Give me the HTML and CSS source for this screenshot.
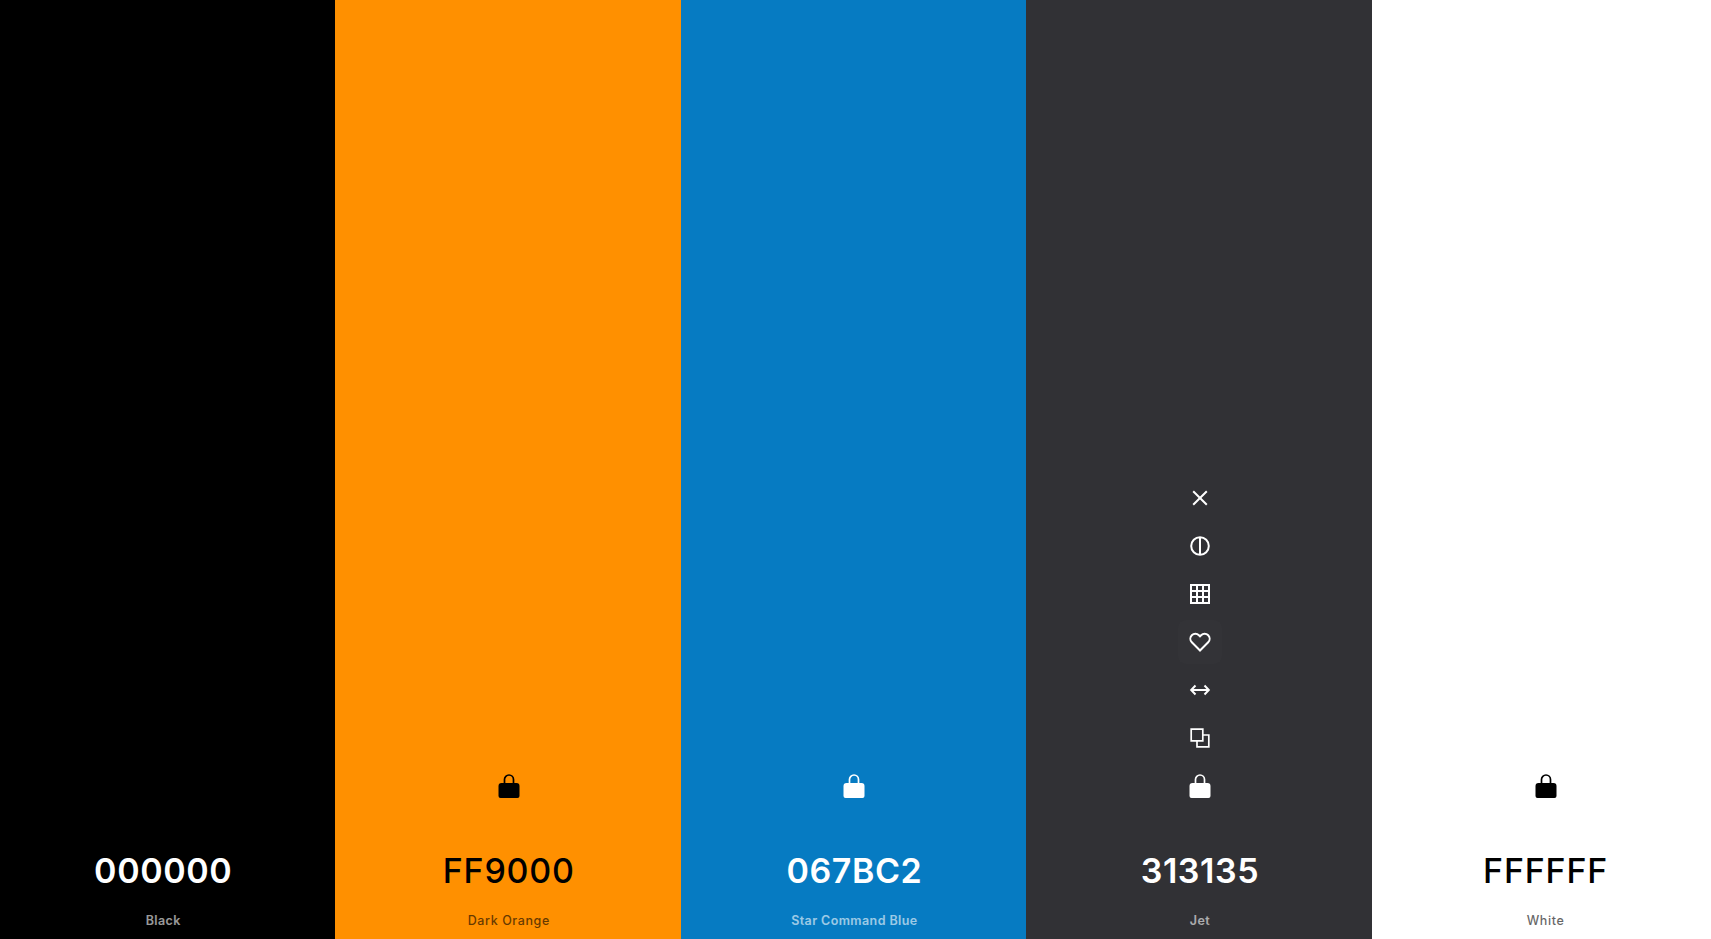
FILE: index.html
```html
<!DOCTYPE html>
<html lang="en">
  <head>
    <meta charset="UTF-8" />
    <title>Palette</title>
    <link rel="stylesheet" href="styles.css">
  </head>
  <body>
    <div class="palette">
      <div class="swatch swatch-black">
        <div class="code">000000</div>
        <div class="name">Black</div>
      </div>

      <div class="swatch swatch-orange">
        <div class="tools">
          <button class="tool">
            <svg viewBox="0 0 24 24"><path class="solid" d="M4.500 9h15a3 3 0 0 1 3 3v10a2 2 0 0 1-2 2h-17a2 2 0 0 1-2-2V12a3 3 0 0 1 3-3z" /><path class="thin" d="M7.500 10V5.500a4.500 4.500 0 0 1 9 0V10" /></svg>
          </button>
        </div>
        <div class="code">FF9000</div>
        <div class="name">Dark Orange</div>
      </div>

      <div class="swatch swatch-blue">
        <div class="tools">
          <button class="tool">
            <svg viewBox="0 0 24 24"><path class="solid" d="M4.500 9h15a3 3 0 0 1 3 3v10a2 2 0 0 1-2 2h-17a2 2 0 0 1-2-2V12a3 3 0 0 1 3-3z" /><path class="thin" d="M7.500 10V5.500a4.500 4.500 0 0 1 9 0V10" /></svg>
          </button>
        </div>
        <div class="code">067BC2</div>
        <div class="name">Star Command Blue</div>
      </div>

      <div class="swatch swatch-jet">
        <div class="tools">
          <button class="tool">
            <svg viewBox="0 0 24 24"><path d="M5.200 5.200l13.600 13.600M18.800 5.200L5.200 18.800" /></svg>
          </button>
          <button class="tool">
            <svg viewBox="0 0 24 24"><circle cx="12" cy="12" r="8.800" /><path d="M12 3.500v17" /></svg>
          </button>
          <button class="tool">
            <svg viewBox="0 0 24 24"><path d="M3 3h18v18H3zM3 9h18M3 15h18M9 3v18M15 3v18" /></svg>
          </button>
          <button class="tool tool-active">
            <svg viewBox="0 0 24 24"><path d="M12 20.500L3.800 12.200a5 5 0 0 1 0-7 5 5 0 0 1 7.100 0L12 6.300l1.100-1.100a5 5 0 0 1 7.100 0 5 5 0 0 1 0 7z" /></svg>
          </button>
          <button class="tool">
            <svg viewBox="0 0 24 24"><path d="M3.500 12h17M7.500 7.500L3.200 12l4.300 4.500M16.500 7.500l4.300 4.500-4.300 4.500" /></svg>
          </button>
          <button class="tool">
            <svg viewBox="0 0 24 24"><path class="thin" d="M3.200 3.200h11.600v11.600H3.200zM14.800 9h6v11.800H9v-6" /></svg>
          </button>
          <button class="tool">
            <svg viewBox="0 0 24 24"><path class="solid" d="M4.500 9h15a3 3 0 0 1 3 3v10a2 2 0 0 1-2 2h-17a2 2 0 0 1-2-2V12a3 3 0 0 1 3-3z" /><path class="thin" d="M7.500 10V5.500a4.500 4.500 0 0 1 9 0V10" /></svg>
          </button>
        </div>
        <div class="code">313135</div>
        <div class="name">Jet</div>
      </div>

      <div class="swatch swatch-white">
        <div class="tools">
          <button class="tool">
            <svg viewBox="0 0 24 24"><path class="solid" d="M4.500 9h15a3 3 0 0 1 3 3v10a2 2 0 0 1-2 2h-17a2 2 0 0 1-2-2V12a3 3 0 0 1 3-3z" /><path class="thin" d="M7.500 10V5.500a4.500 4.500 0 0 1 9 0V10" /></svg>
          </button>
        </div>
        <div class="code">FFFFFF</div>
        <div class="name">White</div>
      </div>
    </div>
  </body>
</html>
```

FILE: styles.css
```css
* {
  margin: 0;
  padding: 0;
  box-sizing: border-box;
}

html,
body {
  height: 100%;
  overflow: hidden;
}

body {
  font-family: "Inter", sans-serif;
}

/* the strip is a bit wider than the window and starts left of it */
.palette {
  display: flex;
  height: 939px;
  width: 1728px;
  margin-left: -10.6px;
}

.swatch {
  flex: 1 1 0;
  display: flex;
  flex-direction: column;
  align-items: center;
  justify-content: flex-end;
  padding-left: 2px;
  color: #fff;
}

.swatch-black {
  background-color: #000;
}

.swatch-orange {
  background-color: #ff9000;
  color: #000;
}

.swatch-blue {
  background-color: #067bc2;
}

.swatch-jet {
  background-color: #313135;
}

.swatch-white {
  background-color: #fff;
  color: #000;
}

.tools {
  display: flex;
  flex-direction: column;
  align-items: center;
  gap: 4px;
  margin-bottom: 42px;
}

.tool {
  width: 44px;
  height: 44px;
  display: flex;
  align-items: center;
  justify-content: center;
  color: inherit;
  background: none;
  border: none;
  border-radius: 8px;
}

.tool-active {
  background-color: rgba(255, 255, 255, 0.012);
}

.tool svg {
  width: 24px;
  height: 24px;
  fill: none;
  stroke: currentColor;
  stroke-width: 2;
}

.tool svg .thin {
  stroke-width: 1.7;
}

.tool svg .solid {
  fill: currentColor;
  stroke: none;
}

.code {
  font-size: 34px;
  font-weight: 600;
  line-height: 42px;
  letter-spacing: 0.6px;
}

.swatch-orange .code,
.swatch-white .code {
  font-weight: 500;
  letter-spacing: 0.8px;
}

.name {
  margin-top: 19px;
  margin-bottom: 8px;
  font-size: 12.5px;
  font-weight: 600;
  line-height: 20px;
  letter-spacing: 0.4px;
  opacity: 0.6;
}

.swatch-orange .name,
.swatch-white .name {
  font-weight: 500;
  letter-spacing: 0.6px;
}
```
